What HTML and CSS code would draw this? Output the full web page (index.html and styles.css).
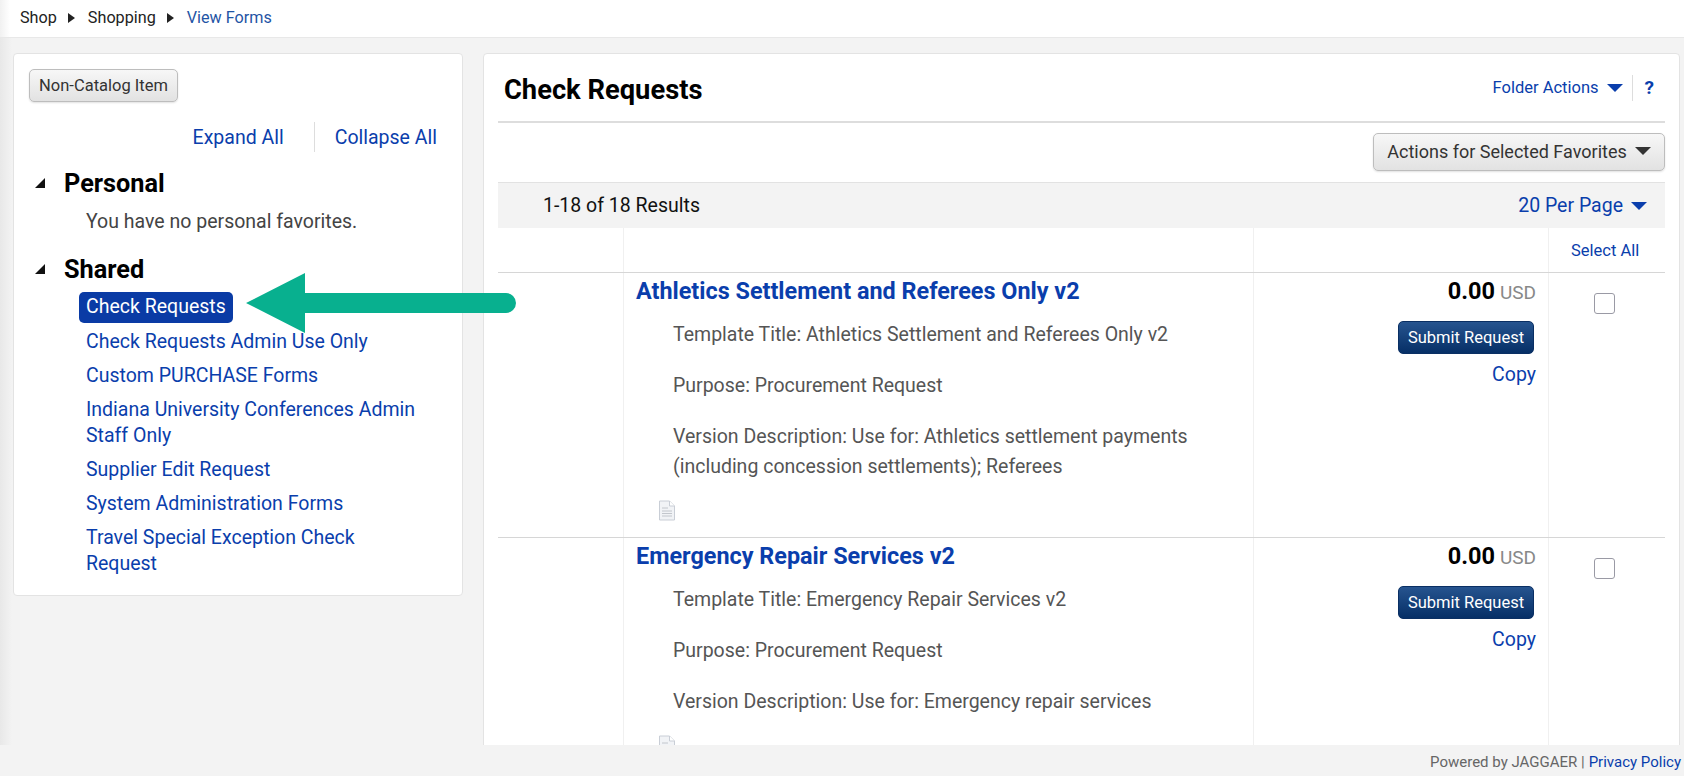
FILE: index.html
```html
<!DOCTYPE html>
<html lang="en">
<head>
<meta charset="utf-8">
<title>View Forms</title>
<link rel="stylesheet" href="styles.css">
</head>
<body>
<nav class="crumbs">
  <span>Shop</span><i class="crumb-sep"></i><span>Shopping</span><i class="crumb-sep"></i><a href="#">View Forms</a>
</nav>
<div class="main">
  <aside class="side">
    <button class="btn btn-small">Non-Catalog Item</button>
    <div class="expand">
      <a href="#">Expand All</a><span class="expand-div"></span><a href="#">Collapse All</a>
    </div>
    <section class="group">
      <h2><i class="tri"></i>Personal</h2>
      <p class="empty">You have no personal favorites.</p>
    </section>
    <section class="group group-shared">
      <h2><i class="tri"></i>Shared</h2>
      <ul class="folders">
        <li><a class="current" href="#">Check Requests</a></li>
        <li><a href="#">Check Requests Admin Use Only</a></li>
        <li><a href="#">Custom PURCHASE Forms</a></li>
        <li><a href="#">Indiana University Conferences Admin Staff Only</a></li>
        <li><a href="#">Supplier Edit Request</a></li>
        <li><a href="#">System Administration Forms</a></li>
        <li><a href="#">Travel Special Exception Check Request</a></li>
      </ul>
    </section>
  </aside>
  <main class="content">
    <header class="head">
      <h1>Check Requests</h1>
      <div class="head-links">
        <a href="#">Folder Actions</a><i class="caret caret-blue"></i><span class="head-div"></span><a class="help" href="#">?</a>
      </div>
    </header>
    <div class="toolbar">
      <button class="btn btn-actions">Actions for Selected Favorites<i class="caret caret-dark"></i></button>
    </div>
    <div class="results">
      <span>1-18 of 18 Results</span>
      <a class="per-page" href="#">20 Per Page<i class="caret caret-blue"></i></a>
    </div>
    <div class="row row-head">
      <div></div><div></div><div></div>
      <div class="select-all"><a href="#">Select All</a></div>
    </div>
    <article class="row">
      <div></div>
      <div class="info">
        <h3><a href="#">Athletics Settlement and Referees Only v2</a></h3>
        <p>Template Title: Athletics Settlement and Referees Only v2</p>
        <p>Purpose: Procurement Request</p>
        <p>Version Description: Use for: Athletics settlement payments<br>(including concession settlements); Referees</p>
        <svg class="doc" viewBox="0 0 18 21"><path d="M1.500 1h10l5 5v14h-15z" fill="#f1f3f6" stroke="#c9ced6"/><path d="M11.500 1v5h5" fill="#fff" stroke="#c9ced6"/><path d="M4 8h6M4 11h10M4 13.500h10M4 16h10" stroke="#c2c6cc"/></svg>
      </div>
      <div class="price">
        <div class="amount"><b>0.00</b> <span>USD</span></div>
        <button class="btn-submit">Submit Request</button>
        <a class="copy" href="#">Copy</a>
      </div>
      <div class="pick"><i class="check"></i></div>
    </article>
    <article class="row">
      <div></div>
      <div class="info">
        <h3><a href="#">Emergency Repair Services v2</a></h3>
        <p>Template Title: Emergency Repair Services v2</p>
        <p>Purpose: Procurement Request</p>
        <p>Version Description: Use for: Emergency repair services</p>
        <svg class="doc" viewBox="0 0 18 21"><path d="M1.500 1h10l5 5v14h-15z" fill="#f1f3f6" stroke="#c9ced6"/><path d="M11.500 1v5h5" fill="#fff" stroke="#c9ced6"/><path d="M4 8h6M4 11h10M4 13.500h10M4 16h10" stroke="#c2c6cc"/></svg>
      </div>
      <div class="price">
        <div class="amount"><b>0.00</b> <span>USD</span></div>
        <button class="btn-submit">Submit Request</button>
        <a class="copy" href="#">Copy</a>
      </div>
      <div class="pick"><i class="check"></i></div>
    </article>
  </main>
</div>
<footer class="foot">Powered by JAGGAER | <a href="#">Privacy Policy</a></footer>
<svg class="arrow" viewBox="0 0 271 62"><path d="M1 31 60 1v20h201a10 10 0 0 1 0 20H60v20z" fill="#08b08f"/></svg>
</body>
</html>
```

FILE: styles.css
```css
* { box-sizing: border-box; }
html, body { height: 100%; }
body {
  margin: 0;
  height: 776px;
  overflow: hidden;
  display: flex;
  flex-direction: column;
  position: relative;
  font-family: Roboto, "Liberation Sans", sans-serif;
  font-size: 19.5px;
  color: #444;
  background: #f3f3f3;
}
a { color: #0a3eac; text-decoration: none; }
h1, h2, h3, p, ul { margin: 0; padding: 0; }
i { display: inline-block; }

.crumbs {
  flex: none;
  height: 38px;
  padding: 0 0 2px 20px;
  display: flex;
  align-items: center;
  font-size: 16.2px;
  color: #222;
  background: linear-gradient(to right, #f1f1f1, #fff 10px);
  border-bottom: 1px solid #e8e8e8;
}
.crumbs a { color: #1f55a5; }
.crumb-sep {
  width: 0;
  height: 0;
  margin: 0 13px 0 11px;
  border-left: 7px solid #222;
  border-top: 5px solid transparent;
  border-bottom: 5px solid transparent;
}

.main {
  flex: 1;
  min-height: 0;
  overflow: hidden;
  display: flex;
  align-items: flex-start;
  gap: 20px;
  padding: 15px 4px 0 13px;
  background: linear-gradient(to right, #e8e8e8, #f3f3f3 12px);
}

.side {
  flex: none;
  width: 450px;
  height: 543px;
  padding: 15px 16px 0 15px;
  background: #fff;
  border: 1px solid #e3e3e3;
  border-radius: 4px;
}
.btn {
  font-family: inherit;
  color: #333;
  background: linear-gradient(#f7f7f7, #e2e2e2);
  border: 1px solid #bdbdbd;
  border-radius: 5px;
  box-shadow: 0 1px 2px rgba(0,0,0,.12);
}
.btn-small {
  display: block;
  width: 149px;
  height: 33px;
  padding: 0;
  font-size: 16.5px;
}
.expand {
  margin-top: 19px;
  padding-right: 9px;
  display: flex;
  justify-content: flex-end;
  align-items: center;
  height: 32px;
}
.expand-div {
  width: 1px;
  height: 30px;
  margin: 0 20px 0 30px;
  background: #ddd;
}
.group { margin-top: 15px; }
.group h2 {
  display: flex;
  align-items: center;
  height: 30px;
  padding-left: 6px;
  font-size: 25.3px;
  font-weight: 700;
  color: #000;
}
.tri {
  width: 0;
  height: 0;
  margin-right: 19px;
  border-right: 10px solid #111;
  border-top: 10px solid transparent;
}
.empty { margin: 9px 0 0 57px; line-height: 30px; }
.group-shared { margin-top: 17px; }
.folders { list-style: none; margin: 8px 0 0 50px; }
.folders li { margin-bottom: 8px; line-height: 26px; padding: 0 30px 0 7px; }
.folders li:first-child { margin-bottom: 6px; padding: 0; }
.folders .current {
  display: inline-block;
  padding: 2px 7px 3px;
  color: #fff;
  background: #0a3ba5;
  border-radius: 5px;
}

.content {
  flex: 1;
  min-width: 0;
  height: 720px;
  padding: 0 14px 0 14px;
  background: #fff;
  border: 1px solid #e3e3e3;
  border-radius: 4px;
}
.head {
  height: 69px;
  padding: 0 11px 0 6px;
  display: flex;
  justify-content: space-between;
  align-items: center;
  border-bottom: 2px solid #ddd;
}
.head h1 { font-size: 27.3px; font-weight: 700; color: #000; padding-top: 4px; }
.head-links { display: flex; align-items: center; font-size: 16.5px; }
.head-div { width: 1px; height: 26px; margin: 0 12px 0 9px; background: #ddd; }
.help { font-weight: 700; font-size: 19px; }
.caret { width: 0; height: 0; margin-left: 8px; border-left: 8px solid transparent; border-right: 8px solid transparent; border-top: 8px solid; }
.caret-blue { color: #0a3eac; border-top-color: #0a3eac; }
.caret-dark { border-top-color: #333; margin-left: 8px; }
.toolbar { display: flex; justify-content: flex-end; padding-top: 10px; height: 59px; }
.btn-actions {
  width: 292px;
  height: 38px;
  padding: 0 0 2px;
  font-size: 18px;
  display: flex;
  align-items: center;
  justify-content: center;
}
.results {
  height: 46px;
  padding: 0 18px 0 45px;
  display: flex;
  justify-content: space-between;
  align-items: center;
  color: #111;
  background: #f3f3f3;
  border-top: 1px solid #e2e2e2;
}
.per-page { display: flex; align-items: center; }
.row {
  display: grid;
  grid-template-columns: 125px 630px 295px 1fr;
  border-bottom: 1px solid #d6d6d6;
  height: 265px;
}
.row > div + div { border-left: 1px solid #f0f0f0; }
.row-head { height: 45px; }
.select-all { padding: 11px 0 0 22px; font-size: 16.5px; line-height: 24px; }
.info { padding: 5px 0 0 12px; }
.info h3 { font-size: 23.4px; font-weight: 700; line-height: 27px; margin-bottom: 15px; }
.info p { margin: 0 0 21px 37px; line-height: 30px; color: #555; }
.doc { display: block; width: 18px; height: 21px; margin: -3px 0 0 22px; }
.price { padding: 4px 12px 0 0; text-align: right; }
.amount { line-height: 28px; }
.amount b { font-size: 23.5px; color: #000; }
.amount span { color: #888; font-size: 19px; }
.btn-submit {
  display: block;
  width: 136px;
  height: 33px;
  margin: 14px 2px 0 auto;
  padding: 0;
  font-family: inherit;
  font-size: 16.5px;
  color: #fff;
  background: linear-gradient(#26548f, #062f66);
  border: 1px solid #0a2f63;
  border-radius: 5px;
}
.copy { display: block; margin-top: 8px; line-height: 26px; }
.pick { padding: 20px 0 0 45px; }
.check { display: block; width: 21px; height: 21px; background: #fff; border: 1px solid #9a9aa5; border-radius: 3px; }

.foot {
  flex: none;
  height: 31px;
  padding: 2px 3px 0 0;
  display: flex;
  align-items: center;
  justify-content: flex-end;
  gap: 4px;
  font-size: 15px;
  color: #666;
  background: #f3f3f3;
  position: relative;
  z-index: 1;
}

.arrow {
  position: absolute;
  left: 245px;
  top: 272px;
  width: 271px;
  height: 62px;
}
```
